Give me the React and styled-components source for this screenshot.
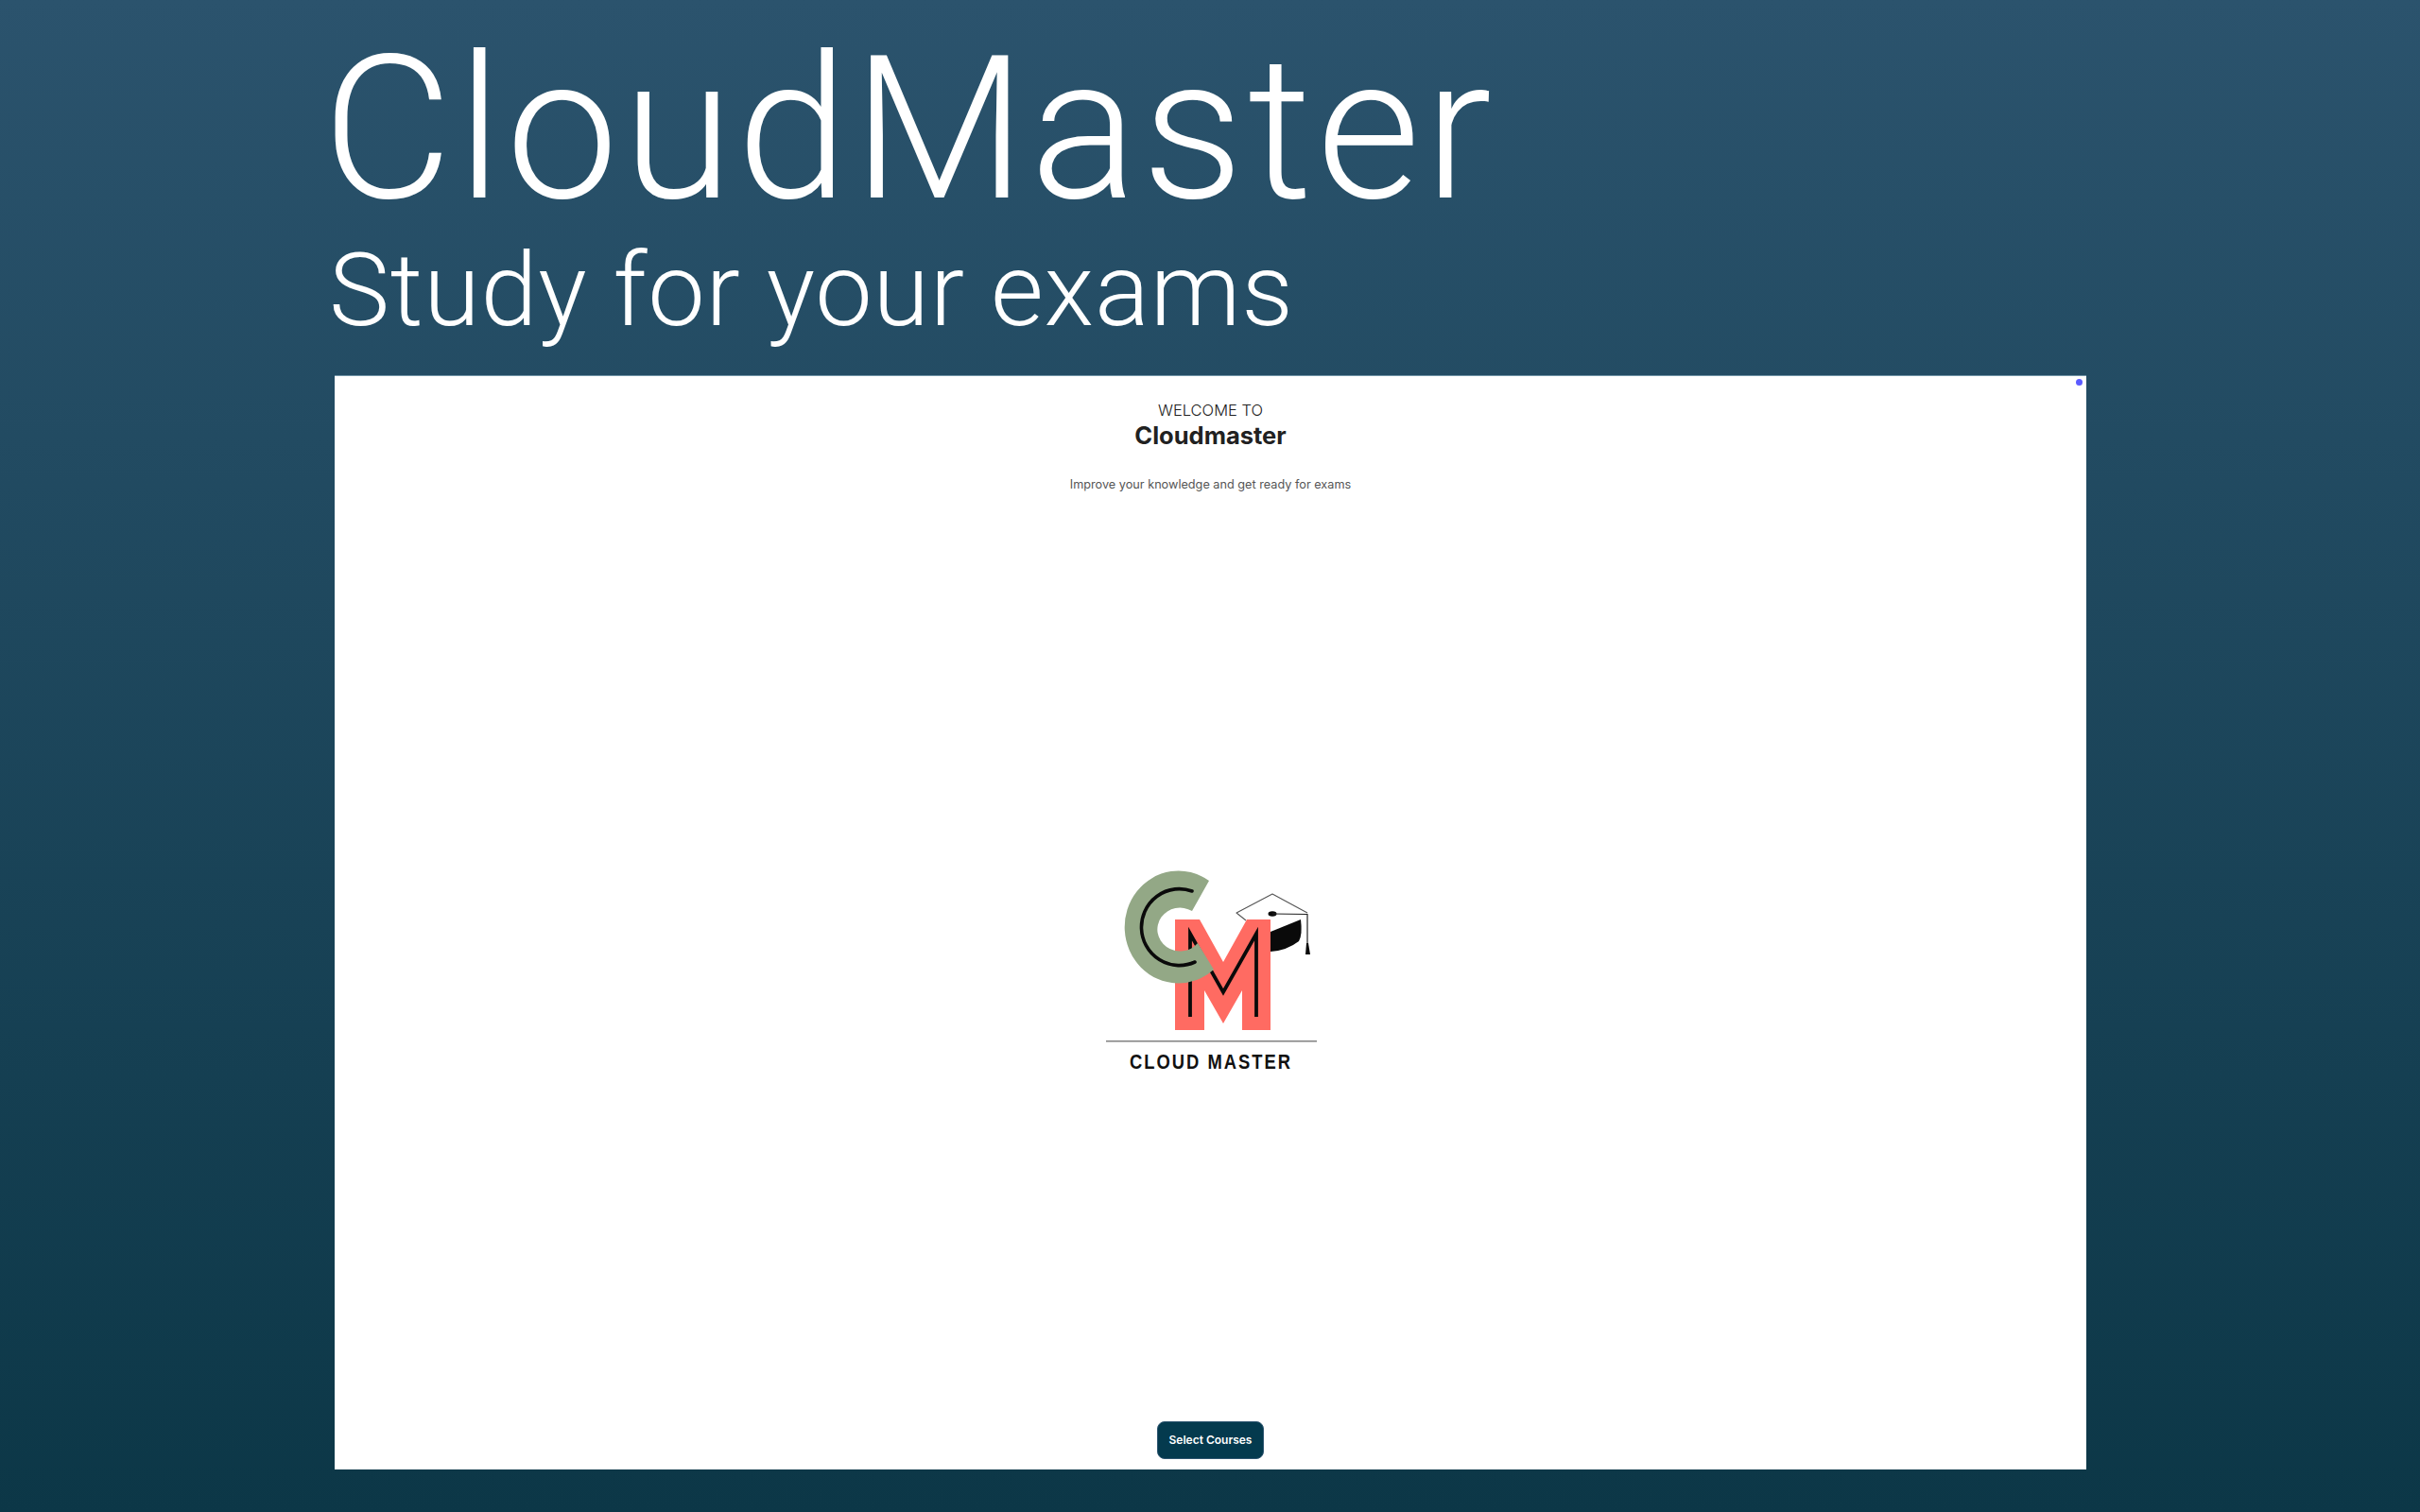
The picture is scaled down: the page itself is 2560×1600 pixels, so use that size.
import React from 'react';
import styled, { createGlobalStyle } from 'styled-components';

const GlobalStyle = createGlobalStyle`
  html, body {
    margin: 0;
    padding: 0;
  }
  body {
    font-family: "Inter", "Liberation Sans", sans-serif;
  }
`;

const Page = styled.div`
  box-sizing: border-box;
  width: 2560px;
  height: 1600px;
  padding: 0 354px 45px 354px;
  display: flex;
  flex-direction: column;
  overflow: hidden;
  background: linear-gradient(180deg, #2b536d 0%, #0c3747 100%);
`;

const Hero = styled.header`
  height: 397px;
  flex: none;
  color: #fff;
  font-family: "Roboto", "Liberation Sans", sans-serif;
  font-weight: 300;
`;

const Title = styled.h1`
  margin: 0 0 0 -13px;
  padding-top: 27px;
  font-size: 212px;
  font-weight: 300;
  line-height: 220px;
  letter-spacing: 4.5px;
  white-space: nowrap;
`;

const Subtitle = styled.h2`
  margin: 0 0 0 -6px;
  padding-top: 2px;
  font-size: 108px;
  font-weight: 300;
  line-height: 116px;
  letter-spacing: 0.8px;
  white-space: nowrap;
`;

const Panel = styled.main`
  position: relative;
  flex: 1;
  margin-right: -1px;
  display: flex;
  flex-direction: column;
  align-items: center;
  background: #fff;
  border-top: 1px solid #6f93a5;
`;

const StatusDot = styled.span`
  position: absolute;
  top: 3px;
  right: 4px;
  width: 7px;
  height: 7px;
  border-radius: 50%;
  background: #5b5bff;
`;

const Intro = styled.section`
  padding-top: 24px;
  text-align: center;
  color: #212121;
`;

const Welcome = styled.div`
  font-size: 16.5px;
  font-weight: 300;
  line-height: 24px;
`;

const Brand = styled.div`
  font-size: 25.5px;
  font-weight: 700;
  line-height: 30px;
`;

const Tagline = styled.p`
  margin: 27px 0 0;
  font-size: 12.7px;
  line-height: 20px;
  color: #555;
`;

const LogoArea = styled.div`
  flex: 1;
  padding-top: 14px;
  display: flex;
  align-items: center;
  justify-content: center;
`;

const SelectButton = styled.button`
  width: 113px;
  height: 40px;
  margin-bottom: 11px;
  padding: 0 0 2px;
  border: 1px solid #2d5570;
  border-radius: 8px;
  background: #043a4e;
  color: #fff;
  font-family: inherit;
  font-size: 12px;
  font-weight: 600;
`;

function Logo() {
  return (
    <svg width="300" height="260" viewBox="0 0 300 260" aria-label="Cloud Master logo">
      {/* mortarboard */}
      <path d="M213 95 L245 82 Q247 98 243 105 Q230 115 213 116 Z" fill="#0a0a0a" />
      <path
        d="M187 83 L177 75 L215 55 L252 75"
        fill="none"
        stroke="#555"
        strokeWidth="1.1"
        strokeLinejoin="round"
      />
      <ellipse cx="215" cy="76" rx="4.5" ry="2.7" fill="#0a0a0a" />
      <path d="M215 76 L252 76.5 L252 107" fill="none" stroke="#222" strokeWidth="1.2" />
      <path d="M251 107 L253 107 L255 119 L250 119 Z" fill="#0a0a0a" />
      {/* M goes under the C, so the C hides part of its inline */}
      <path
        d="M112 82 H138 L163 127 L188 82 H213 V199 H183 V157 L163 192 L143 157 V199 H112 Z"
        fill="#ff6b62"
      />
      <path
        d="M128 185 V97 L163 159 L198 97 V185"
        fill="none"
        stroke="#0a0a0a"
        strokeWidth="3.8"
      />
      <path
        d="M148 41 A57 59.5 0 1 0 153 135 L136 107 A24 23 0 1 1 130 73 Z"
        fill="#93a886"
      />
      <path
        d="M130 52 A40 40.5 0 1 0 133 127"
        fill="none"
        stroke="#0a0a0a"
        strokeWidth="3.6"
        strokeLinecap="round"
      />
      {/* wordmark */}
      <rect x="39" y="210" width="223" height="1.6" fill="#888" />
      <text
        x="150"
        y="240"
        textAnchor="middle"
        fontFamily="Liberation Sans, sans-serif"
        fontSize="22"
        fontWeight="700"
        letterSpacing="2.4"
        textLength="172"
        lengthAdjust="spacingAndGlyphs"
        fill="#111"
      >
        CLOUD MASTER
      </text>
    </svg>
  );
}

export default function App() {
  return (
    <>
      <GlobalStyle />
      <Page>
        <Hero>
          <Title>CloudMaster</Title>
          <Subtitle>Study for your exams</Subtitle>
        </Hero>
        <Panel>
          <StatusDot />
          <Intro>
            <Welcome>WELCOME TO</Welcome>
            <Brand>Cloudmaster</Brand>
            <Tagline>Improve your knowledge and get ready for exams</Tagline>
          </Intro>
          <LogoArea>
            <Logo />
          </LogoArea>
          <SelectButton type="button">Select Courses</SelectButton>
        </Panel>
      </Page>
    </>
  );
}
